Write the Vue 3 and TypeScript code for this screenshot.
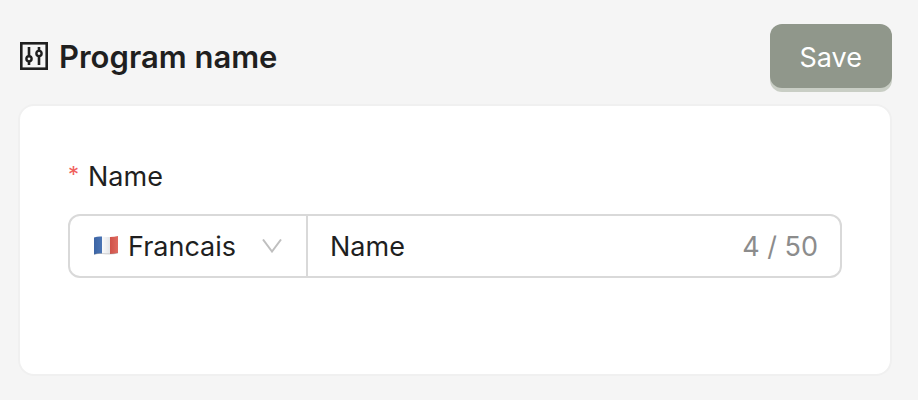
<script setup lang="ts">
import { computed, ref } from 'vue'

const maxLength = 50
const language = ref<string>('fr')
const name = ref<string>('Name')
const counter = computed<string>(() => `${name.value.length} / ${maxLength}`)
</script>

<template>
  <form class="page" @submit.prevent>
    <header class="header">
      <svg class="title-icon" viewBox="0 0 28 28" fill="none" stroke="currentColor" aria-hidden="true">
        <rect x="1.3" y="1.3" width="25.4" height="25.4" stroke-width="2.6" />
        <path d="M9 5V14M9 20V23M19 5V8.500M19 14.500V23" stroke-width="2.600" />
        <circle cx="9" cy="16.8" r="2.600" stroke-width="2.400" />
        <circle cx="19" cy="11.500" r="2.600" stroke-width="2.400" />
      </svg>
      <h1 class="title">Program name</h1>
      <button class="save" type="submit">Save</button>
    </header>

    <section class="card">
      <label class="label" for="program-name"><span class="required">*</span>Name</label>
      <div class="field">
        <div class="language">
          <svg class="flag" viewBox="0 0 26 20" aria-hidden="true">
            <defs>
              <linearGradient id="flag-blue">
                <stop offset="0" stop-color="#3c64a4" />
                <stop offset="1" stop-color="#4a74b4" />
              </linearGradient>
              <linearGradient id="flag-white">
                <stop offset="0" stop-color="#fafafb" />
                <stop offset="1" stop-color="#e3e5e8" />
              </linearGradient>
              <linearGradient id="flag-red">
                <stop offset="0" stop-color="#cf5249" />
                <stop offset="1" stop-color="#df6a60" />
              </linearGradient>
            </defs>
            <path d="M1 1.500Q5 0 9 .500V17.500Q5 17 1 18.500Z" fill="url(#flag-blue)" />
            <path d="M9 .500Q13 1.200 17 1V18Q13 18.200 9 17.500Z" fill="url(#flag-white)" />
            <path d="M17 1Q21 1 25 0V17Q21 18 17 18Z" fill="url(#flag-red)" />
            <path d="M1 18.500Q5 17 9 17.500T17 18T25 17" fill="none" stroke="#777" stroke-opacity=".4" stroke-width=".8" />
          </svg>
          <select v-model="language" class="select" aria-label="Language">
            <option value="fr">Francais</option>
          </select>
          <svg class="chevron" viewBox="0 0 20 14" fill="none" stroke="#bfbfbf" stroke-width="2" aria-hidden="true">
            <path d="M1 .5L10 12.5L19 .5" />
          </svg>
        </div>
        <input id="program-name" v-model="name" class="input" type="text" :maxlength="maxLength" required />
        <span class="counter">{{ counter }}</span>
      </div>
    </section>
  </form>
</template>

<style>
body {
  background: #f5f5f5;
}
</style>

<style scoped>
.page {
  padding: 24px 26px 24px 18px;
  color: #1f1f1f;
  font-family: Inter, "Liberation Sans", sans-serif;
  font-size: 27px;
}

.header {
  display: flex;
  align-items: center;
  margin-bottom: 16px;
}

.title-icon {
  flex: none;
  width: 28px;
  height: 28px;
  margin-left: 2px;
}

.title {
  flex: 1;
  margin: 0 0 0 11px;
  padding-top: 2px;
  font-size: 31px;
  font-weight: 600;
  line-height: 40px;
}

.save {
  height: 64px;
  padding: 2px 30px 0;
  border: 0;
  border-radius: 12px;
  background: #90978b;
  box-shadow: 0 4px 0 #c9cec5;
  color: #fff;
  font: inherit;
  cursor: pointer;
}

.card {
  box-sizing: border-box;
  padding: 48px 48px 96px;
  border: 2px solid #f0f0f0;
  border-radius: 16px;
  background: #fff;
}

.label {
  display: flex;
  align-items: center;
  height: 44px;
  margin-bottom: 16px;
}

.required {
  width: 20px;
  padding-bottom: 4px;
  color: #f0605d;
  font-size: 22px;
  line-height: 24px;
}

.field {
  display: flex;
  box-sizing: border-box;
  height: 64px;
  border: 2px solid #d9d9d9;
  border-radius: 12px;
  background: #fff;
}

.language {
  position: relative;
  flex: none;
  width: 236px;
  border-right: 2px solid #d9d9d9;
}

.flag,
.chevron {
  position: absolute;
  top: 50%;
  transform: translateY(-50%);
  pointer-events: none;
}

.flag {
  left: 22px;
  width: 28px;
  height: 20px;
}

.chevron {
  right: 24px;
  width: 20px;
  height: 14px;
}

.select {
  width: 100%;
  height: 100%;
  padding: 0 48px 0 58px;
  border: 0;
  outline: 0;
  appearance: none;
  background: transparent;
  color: inherit;
  font: inherit;
}

.input {
  flex: 1;
  min-width: 0;
  padding: 0 22px;
  border: 0;
  outline: 0;
  background: transparent;
  color: inherit;
  font: inherit;
}

.counter {
  align-self: center;
  padding-right: 22px;
  color: #8c8c8c;
}
</style>
